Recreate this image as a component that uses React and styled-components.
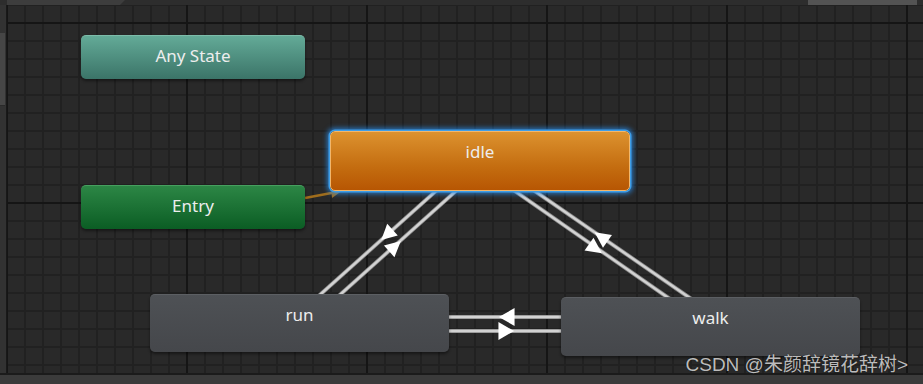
import React from 'react';
import styled, { createGlobalStyle, css } from 'styled-components';

const Global = createGlobalStyle`
  html, body { margin: 0; padding: 0; background: #282828; overflow: hidden; }
  #root { width: 923px; height: 384px; }
`;

const Window = styled.div`
  position: relative;
  width: 923px;
  height: 384px;
  display: flex;
  flex-direction: column;
  background: #282828;
  font-family: "Noto Sans", "Open Sans", sans-serif;
`;

const TopBar = styled.div`
  height: 5px;
  flex: none;
  display: flex;
  background: #2d2d2d;
`;

const TopTab = styled.div`
  margin-left: 7px;
  width: 118px;
  background: #3d3d3d;
  clip-path: polygon(0 0, 100% 0, calc(100% - 5px) 100%, 0 100%);
`;

const TopSpacer = styled.div`
  flex: 1;
`;

const TopBox = styled.div`
  width: 109px;
  margin-right: 6px;
  background: #535353;
`;

const Middle = styled.div`
  flex: 1;
  display: flex;
  min-height: 0;
`;

const SidePanel = styled.div`
  width: 6px;
  flex: none;
  background: #323232;
  border-right: 1px solid #191919;
  display: flex;
  flex-direction: column;
`;

const SideThumb = styled.div`
  margin-top: 28px;
  height: 72px;
  width: 5px;
  background: #464646;
  border-bottom: 1px solid #2a2a2a;
`;

const Canvas = styled.div`
  flex: 1;
  position: relative;
  overflow: hidden;
  background-color: #292929;
  background-image:
    linear-gradient(to right, #151515 2px, transparent 2px),
    linear-gradient(to bottom, #151515 2px, transparent 2px),
    linear-gradient(to right, #212121 2px, transparent 2px),
    linear-gradient(to bottom, #212121 2px, transparent 2px);
  background-size: 180px 180px, 180px 180px, 18px 18px, 18px 18px;
  background-position: -1px 0, 0 -163px, -1px 0, 0 -1px;
`;

const BottomBar = styled.div`
  height: 9px;
  flex: none;
  border-top: 2px solid #1b1b1b;
  background: #3b3b3b;
`;

const variants = {
  any: css`
    background: linear-gradient(to bottom, #63aa97, #3b7468);
    border-top: 1px solid #7dbcaa;
  `,
  entry: css`
    background: linear-gradient(to bottom, #2c8645, #0b5d24);
    border-top: 1px solid #46a05f;
  `,
  idle: css`
    background: linear-gradient(to bottom, #dc922f, #c46d10 60%, #b75603);
    border: 1px solid #f2b66a;
    box-shadow: 0 0 0 1.5px #3e9ee8, 0 0 5px 2.5px rgba(40, 140, 235, 0.75);
  `,
  state: css`
    background: linear-gradient(to bottom, #4e5155, #45474b);
    border-top: 1px solid #5c5f63;
  `,
};

const Node = styled.div`
  position: absolute;
  left: ${(p) => p.$x}px;
  top: ${(p) => p.$y}px;
  width: ${(p) => p.$w}px;
  height: ${(p) => p.$h}px;
  box-sizing: border-box;
  border-radius: 5px;
  display: flex;
  justify-content: center;
  align-items: flex-start;
  padding-top: 10px;
  color: #ededed;
  font-size: 17px;
  line-height: 20px;
  box-shadow: 0 2px 3px rgba(0, 0, 0, 0.45);
  ${(p) => variants[p.$kind]}
`;

const Edges = styled.svg`
  position: absolute;
  left: 0;
  top: 0;
  overflow: visible;
`;

const Watermark = styled.div`
  position: absolute;
  right: 15px;
  bottom: 8px;
  font-family: "Liberation Sans", "Noto Sans CJK SC", sans-serif;
  font-size: 19px;
  line-height: 22px;
  color: rgba(220, 220, 220, 0.85);
  text-shadow: 0 0 1px rgba(0, 0, 0, 0.6);
  white-space: nowrap;
`;

const nodes = [
  { id: 'any', label: 'Any State', kind: 'any', x: 74, y: 30, w: 224, h: 44 },
  { id: 'entry', label: 'Entry', kind: 'entry', x: 74, y: 180, w: 224, h: 44 },
  { id: 'idle', label: 'idle', kind: 'idle', x: 323, y: 126, w: 300, h: 60 },
  { id: 'run', label: 'run', kind: 'state', x: 143, y: 289, w: 299, h: 58 },
  { id: 'walk', label: 'walk', kind: 'state', x: 554, y: 292, w: 299, h: 59 },
];

const lines = [
  [441.5, 186, 316.4, 298],
  [461.5, 186, 336.4, 298],
  [507.6, 186, 671.4, 300],
  [527.5, 186, 692.8, 300],
  [445, 317, 565, 317],
  [445, 331, 565, 331],
];

const rawArrows = [
  [[382, 239.3], [396.8, 235.2], [387.4, 224.8]],
  [[400, 241.7], [394.3, 256.2], [384.9, 245.8]],
  [[595.5, 233], [611, 235.3], [603, 246.7]],
  [[601, 252.5], [593.5, 238.8], [585.5, 250.2]],
  [[500, 317], [514, 309], [514, 325]],
  [[513, 331], [499, 323], [499, 339]],
];

const scaleTri = (pts, k) => {
  const cx = (pts[0][0] + pts[1][0] + pts[2][0]) / 3;
  const cy = (pts[0][1] + pts[1][1] + pts[2][1]) / 3;
  return pts.map(([x, y]) => `${cx + (x - cx) * k},${cy + (y - cy) * k}`).join(' ');
};

export default function App() {
  return (
    <>
      <Global />
      <Window>
        <TopBar>
          <TopTab />
          <TopSpacer />
          <TopBox />
        </TopBar>
        <Middle>
          <SidePanel>
            <SideThumb />
          </SidePanel>
          <Canvas>
            <Edges width="916" height="368" viewBox="7 5 916 368">
              <line x1="305" y1="198" x2="334" y2="192.5" stroke="#a06d1c" strokeWidth="2.5" />
              <polygon points="341,191.5 331,187 332,198" fill="#a06d1c" />
              {lines.map((l, i) => (
                <g key={i}>
                  <line x1={l[0]} y1={l[1]} x2={l[2]} y2={l[3]} stroke="#8a8a8a" strokeWidth="4" />
                  <line x1={l[0]} y1={l[1]} x2={l[2]} y2={l[3]} stroke="#d2d2d2" strokeWidth="2.4" />
                </g>
              ))}
              {rawArrows.map((p, i) => (
                <polygon key={i} points={scaleTri(p, 1.12)} fill="#ffffff" />
              ))}
            </Edges>
            {nodes.map((n) => (
              <Node key={n.id} $kind={n.kind} $x={n.x} $y={n.y} $w={n.w} $h={n.h}>
                {n.label}
              </Node>
            ))}
          </Canvas>
        </Middle>
        <BottomBar />
        <Watermark>CSDN @朱颜辞镜花辞树&gt;</Watermark>
      </Window>
    </>
  );
}
